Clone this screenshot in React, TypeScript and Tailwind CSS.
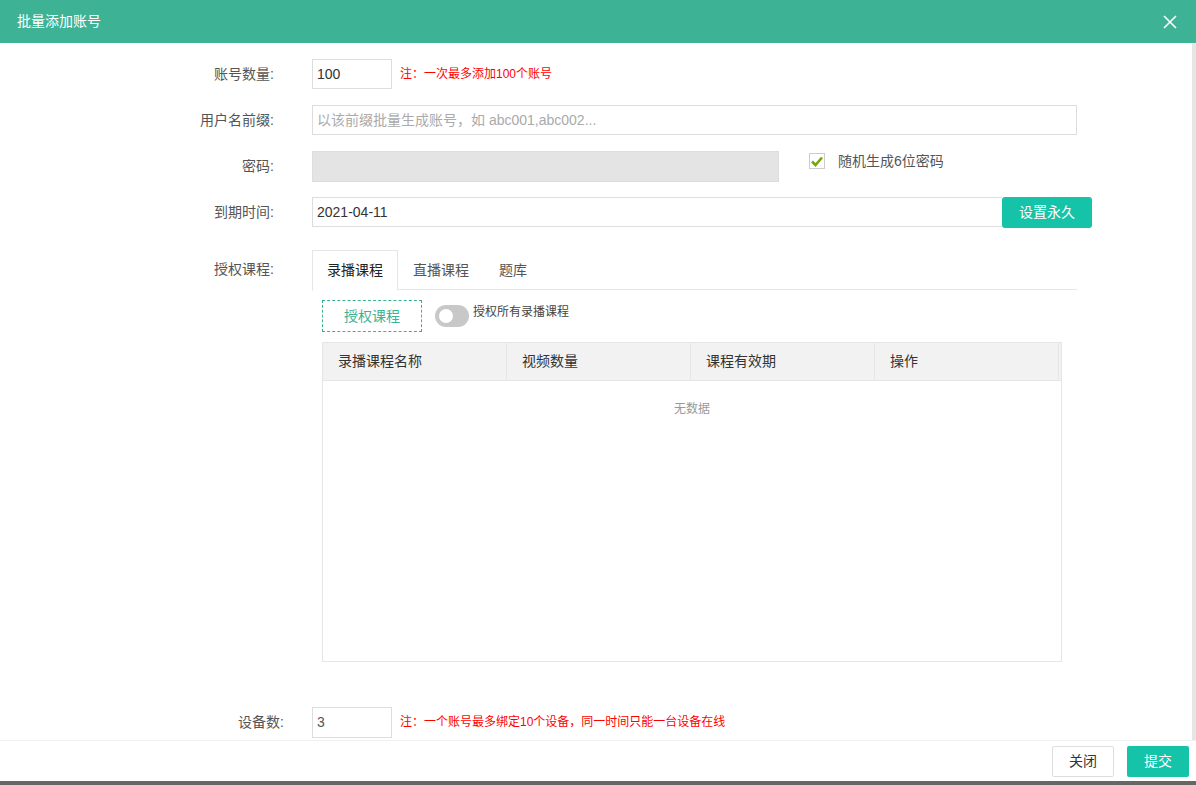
import {useState} from "react";

const font = {fontFamily: '"Liberation Sans", "Noto Sans CJK SC", sans-serif'};

const Row = ({label, children, className = ""}: {label: string; children: React.ReactNode; className?: string}) => (
  <div className={`flex items-start ${className}`}>
    <div className="w-[276px] pr-[2px] text-right text-[14px] text-[#555] leading-[30px]">{label}</div>
    <div className="ml-[36px] flex-1 flex items-start">{children}</div>
  </div>
);

export default function App() {
  const [tab, setTab] = useState(0);
  const tabs = ["录播课程", "直播课程", "题库"];

  return (
    <div style={font} className="w-[1196px] h-[785px] bg-white flex flex-col overflow-hidden relative">
      <div className="h-[43px] bg-[#3eb294] flex items-center justify-between px-[17px] shrink-0">
        <span className="text-white text-[14px]">批量添加账号</span>
        <svg width="14" height="14" viewBox="0 0 14 14" className="mr-[2px]">
          <path d="M1 1L13 13M13 1L1 13" stroke="white" strokeWidth="1.6" />
        </svg>
      </div>

      <div className="flex-1 flex overflow-hidden">
        <div className="flex-1 pt-[16px] flex flex-col">
          <Row label="账号数量:">
            <div className="w-[80px] h-[30px] border border-[#ddd] px-[4px] text-[14px] leading-[28px] text-[#333]">100</div>
            <span className="ml-[8px] text-[12px] text-[#ff0000] leading-[30px]">注：一次最多添加100个账号</span>
          </Row>
          <Row label="用户名前缀:" className="mt-[16px]">
            <div className="w-[765px] h-[30px] border border-[#ddd] px-[4px] text-[14px] leading-[28px] text-[#aaa]">
              以该前缀批量生成账号，如 abc001,abc002...
            </div>
          </Row>
          <Row label="密码:" className="mt-[16px]">
            <div className="w-[467px] h-[31px] border border-[#ddd] bg-[#e4e4e4]" />
            <div className="ml-[30px] flex items-center h-[18px] mt-[1px]">
              <div className="w-[16px] h-[16px] border border-[#ccc] flex items-center justify-center">
                <svg width="12" height="11" viewBox="0 0 12 11">
                  <path d="M1 5.5L4.5 9L11 1.5" stroke="#76a712" strokeWidth="2.6" fill="none" />
                </svg>
              </div>
              <span className="ml-[13px] text-[14px] text-[#555]">随机生成6位密码</span>
            </div>
          </Row>
          <Row label="到期时间:" className="mt-[15px]">
            <div className="w-[690px] h-[30px] border border-[#ddd] border-r-0 px-[4px] text-[14px] leading-[28px] text-[#333]">2021-04-11</div>
            <button className="w-[90px] h-[31px] bg-[#14c3a8] text-white text-[14px] rounded-[3px]">设置永久</button>
          </Row>
          <Row label="授权课程:" className="mt-[26px]">
            <div className="flex flex-col w-[765px] -mt-[4px]">
              <div className="flex h-[40px] border-b border-[#e6e6e6]">
                {tabs.map((t, i) => (
                  <div
                    key={t}
                    onClick={() => setTab(i)}
                    className={`h-[40px] flex items-center justify-center text-[14px] cursor-pointer ${
                      i === tab ? "w-[86px] border border-[#e6e6e6] border-b-white bg-white text-[#222] h-[41px]" : "px-[15px] text-[#555]"
                    }`}
                  >
                    {t}
                  </div>
                ))}
              </div>
              <div className="flex items-center mt-[10px] ml-[10px]">
                <div className="w-[100px] h-[32px] border border-dashed border-[#3eb294] flex items-center justify-center text-[14px] text-[#3eb294]">
                  授权课程
                </div>
                <div className="ml-[13px] w-[34px] h-[22px] rounded-full bg-[#c8c8c8] flex items-center pl-[4px]">
                  <div className="w-[14px] h-[14px] rounded-full bg-white" />
                </div>
                <span className="ml-[4px] -mt-[8px] text-[12px] text-[#444]">授权所有录播课程</span>
              </div>
              <div className="ml-[10px] mt-[10px] w-[740px] h-[320px] border border-[#e6e6e6] flex flex-col">
                <div className="flex h-[38px] bg-[#f2f2f2] border-b border-[#e6e6e6] text-[14px] text-[#333]">
                  {["录播课程名称", "视频数量", "课程有效期", "操作"].map((h) => (
                    <div key={h} className="w-[184px] border-r border-[#e6e6e6] flex items-center px-[15px]">{h}</div>
                  ))}
                </div>
                <div className="text-center text-[12px] text-[#999] mt-[19px]">无数据</div>
              </div>
            </div>
          </Row>
          <div className="flex items-start mt-[45px]">
            <div className="w-[284px] text-right text-[14px] text-[#555] leading-[30px]">设备数:</div>
            <div className="ml-[28px] w-[80px] h-[31px] border border-[#ddd] px-[4px] text-[14px] leading-[28px] text-[#555]">3</div>
            <span className="ml-[8px] text-[12px] text-[#ff0000] leading-[30px]">注：一个账号最多绑定10个设备，同一时间只能一台设备在线</span>
          </div>
        </div>
        <div className="w-[4px] bg-[#e6e6e6]" />
      </div>

      <div className="absolute left-0 right-0 bottom-[4px] h-[41px] bg-white border-t border-[#f0f0f0] flex items-center justify-end gap-[13px] pr-[7px]">
        <button className="w-[62px] h-[31px] border border-[#dedede] rounded-[2px] bg-white text-[14px] text-[#333]">关闭</button>
        <button className="w-[62px] h-[31px] rounded-[2px] bg-[#14c3a8] text-[14px] text-white">提交</button>
      </div>
      <div className="absolute left-0 right-0 bottom-0 h-[4px] bg-[#666]" />
    </div>
  );
}
